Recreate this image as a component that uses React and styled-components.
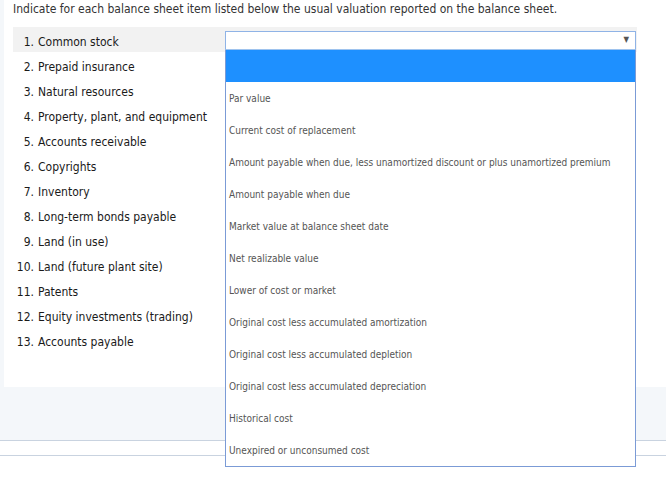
import React from 'react';
import styled, { createGlobalStyle } from 'styled-components';

const GlobalStyle = createGlobalStyle`
    body {
        margin: 0;
        background: #fff;
        font-family: "DejaVu Sans Condensed", "DejaVu Sans", sans-serif;
    }
`

const Page = styled.div`
    background-color: #f4f7fa;
    padding-left: 4px;
    height: 440px;
    border-bottom: 1px solid #c9d3e0;
`

const Panel = styled.div`
    background-color: #fff;
    padding: 1px 0 32px 9px;
    height: 387px;
    box-sizing: border-box;
`

const Title = styled.div`
    font-size: 12px;
    line-height: 16px;
    color: #333;
`

const List = styled.div`
    margin-top: 10px;
    width: 624px;
`

const Row = styled.div`
    display: grid;
    grid-template-columns: 212px 411px;
    align-items: start;
    height: 25px;
    background-color: ${p => p.active ? '#f2f2f2' : 'transparent'};
`

const Label = styled.div`
    display: flex;
    padding-top: 8px;
    font-size: 12px;
    line-height: 14px;
    color: #1a1a1a;
`

const Num = styled.span`
    width: 21px;
    text-align: right;
    margin-right: 4px;
`

const SelectWrap = styled.div`
    position: relative;
    margin-top: 4px;
`

const SelectBox = styled.div`
    height: 17px;
    border: 1px solid #8fb3e6;
    border-bottom-color: #9ec3ee;
    background: #fff;
    position: relative;
`

const Arrow = styled.span`
    position: absolute;
    right: 6px;
    top: 3px;
    font-size: 8px;
    color: #555;
`

const Options = styled.div`
    position: absolute;
    top: 19px;
    left: 0;
    width: 409px;
    border: 1px solid #7b9bd6;
    border-top: none;
    background: #fff;
    z-index: 2;
`

const Option = styled.div`
    height: 32px;
    line-height: 34px;
    padding-left: 3px;
    font-size: 10px;
    color: #555;
    background-color: ${p => p.selected ? '#1e90ff' : '#fff'};
    white-space: nowrap;
    overflow: hidden;
`

const Footer = styled.div`
    height: 14px;
    border-bottom: 1px solid #c9d3e0;
`

const Bottom = styled.div`
    height: 22px;
    background: #fff;
`

const items = [
    'Common stock',
    'Prepaid insurance',
    'Natural resources',
    'Property, plant, and equipment',
    'Accounts receivable',
    'Copyrights',
    'Inventory',
    'Long-term bonds payable',
    'Land (in use)',
    'Land (future plant site)',
    'Patents',
    'Equity investments (trading)',
    'Accounts payable',
]

const choices = [
    '',
    'Par value',
    'Current cost of replacement',
    'Amount payable when due, less unamortized discount or plus unamortized premium',
    'Amount payable when due',
    'Market value at balance sheet date',
    'Net realizable value',
    'Lower of cost or market',
    'Original cost less accumulated amortization',
    'Original cost less accumulated depletion',
    'Original cost less accumulated depreciation',
    'Historical cost',
    'Unexpired or unconsumed cost',
]

export default function App() {
    return (
        <>
            <GlobalStyle />
            <Page>
                <Panel>
                    <Title>Indicate for each balance sheet item listed below the usual valuation reported on the balance sheet.</Title>
                    <List>
                        {items.map((item, i) => (
                            <Row key={item} active={i === 0}>
                                <Label><Num>{i + 1}.</Num>{item}</Label>
                                {i === 0 ? (
                                    <SelectWrap>
                                        <SelectBox><Arrow>▼</Arrow></SelectBox>
                                        <Options>
                                            {choices.map((c, j) => (
                                                <Option key={j} selected={j === 0}>{c}</Option>
                                            ))}
                                        </Options>
                                    </SelectWrap>
                                ) : null}
                            </Row>
                        ))}
                    </List>
                </Panel>
            </Page>
            <Footer />
            <Bottom />
        </>
    )
}
